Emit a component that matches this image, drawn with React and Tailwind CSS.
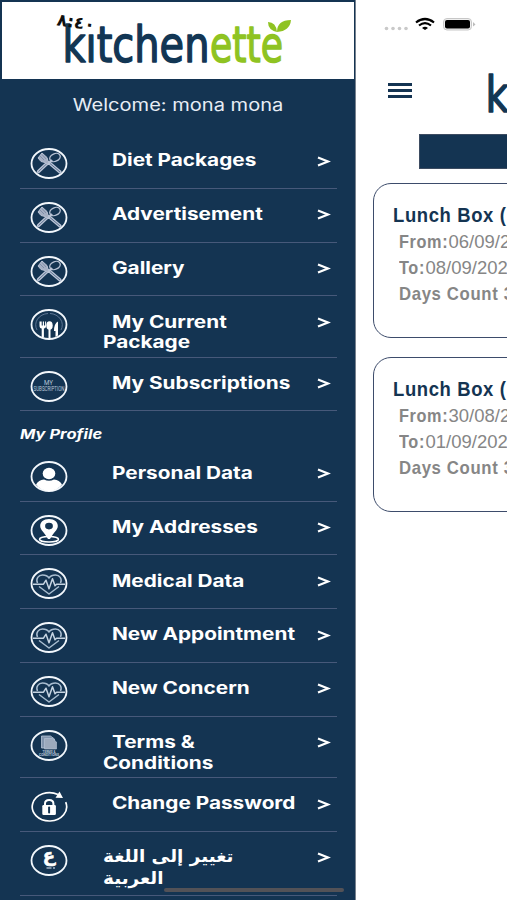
import React from 'react';

const LINE = 'font-["Inter",sans-serif] font-bold text-white text-[16.8px] leading-[20.5px] whitespace-pre';

function Utensils() {
  return (
    <g stroke="#b9c3d5" fill="none" strokeWidth="1">
      <path d="M20 15.500 L30 24" strokeWidth="3.4" strokeLinecap="round" />
      <path d="M20 15.500 L30 24" stroke="#5c7190" strokeWidth="1" />
      <path d="M17 15.500 L8.500 23.5" strokeWidth="3.4" strokeLinecap="round" />
      <path d="M17 15.500 L8.500 23.5" stroke="#5c7190" strokeWidth="1" />
      <path d="M8 10 L12 5 L17 9.5 L18 13 L20 15 L18 17 L15 14.5 L11 13.5 Z" fill="#a6b0c4" />
      <path d="M10 8 L14 12 M12 6.5 L16 11" stroke="#71819e" strokeWidth=".7" />
      <ellipse cx="25" cy="9.5" rx="5.500" ry="3.8" transform="rotate(-25 25 9.5)" strokeWidth="1.4" />
      <path d="M18 16 L22 12" strokeWidth="2.400" />
    </g>
  );
}

function Cutlery() {
  return (
    <g fill="#fff">
      <path d="M7 21 A13 11.5 0 0 1 18 4.5 M31 21 A13 11.5 0 0 0 20 4.5" fill="none" stroke="#7087a5" strokeWidth=".8" />
      <path d="M9.5 12.500v4q0 3 2.2 3v9h2.2v-9q2.2 0 2.2-3v-4h-1v4h-1.1v-4h-1.2v4h-1.1v-4z" />
      <ellipse cx="19.5" cy="16.500" rx="3.200" ry="4.300" />
      <path d="M18.500 18h2v11.500h-2zM28 12.500q-4 2-4 9.500h1.500v6l2.500-1.500z" />
    </g>
  );
}

function Subscription() {
  return (
    <g fill="#b9c6d8" fontFamily="Roboto, sans-serif" textAnchor="middle">
      <text x="18.5" y="13.5" fontSize="6.5" textLength="9" lengthAdjust="spacingAndGlyphs">MY</text>
      <text x="19" y="20" fontSize="6.5" textLength="31" lengthAdjust="spacingAndGlyphs">SUBSCRIPTION</text>
    </g>
  );
}

function Person() {
  return (
    <g fill="#fff">
      <ellipse cx="19" cy="12.5" rx="6.3" ry="5.8" />
      <path d="M6 23.5Q8.5 19 14 18.4q5 2.6 10 0Q29.500 19 32 23.500Q27 30 19 30T6 23.500z" />
    </g>
  );
}

function Pin() {
  return (
    <g>
      <ellipse cx="19" cy="24.200" rx="9.500" ry="2.800" fill="none" stroke="#fff" strokeWidth="1.500" />
      <path fill="#fff" fillRule="evenodd" d="M19 4C13.500 4 10.200 7.200 10.200 11C10.200 15 14.500 17.500 18 24h2C23.500 17.500 27.800 15 27.800 11C27.800 7.200 24.500 4 19 4zm0 3.800a3.900 3.300 0 1 1 0 6.600a3.900 3.300 0 1 1 0-6.600z" />
    </g>
  );
}

function Heart() {
  return (
    <g fill="none" stroke="#a9bdd0" strokeWidth="1.500" strokeLinejoin="round">
      <path d="M7.500 15C5.500 10.500 8.500 7 12.500 7Q17 7 19 10Q21 7 25.500 7C29.500 7 32.500 10.500 30.500 15" />
      <path d="M9 18.500L19 26L29 18.500" />
      <path d="M3 16.200h10.500l2.500-4l3 8.500l3.500-10l2.500 7l1.500-1.500h8.500" stroke="#c6d4e2" />
    </g>
  );
}

function Document() {
  return (
    <g>
      <path d="M11.500 6h9l4 3v9h-13z" fill="#8194ad" stroke="#b9c6d8" strokeWidth=".8" />
      <path d="M14.500 8.500h8l4 3.500v7h-12z" fill="#9daabd" stroke="#b9c6d8" strokeWidth=".6" />
      <g fill="#b9c6d8" fontFamily="Roboto, sans-serif" textAnchor="middle" fontWeight="700">
        <text x="19" y="22.500" fontSize="3.200" textLength="13" lengthAdjust="spacingAndGlyphs">TERMS &amp;</text>
        <text x="19" y="25.500" fontSize="3" textLength="20" lengthAdjust="spacingAndGlyphs">CONDITIONS</text>
      </g>
    </g>
  );
}

function Lock() {
  return (
    <g>
      <path d="M15 15v-2.500q0-3.500 4.200-3.500t4.200 3.500V15" fill="none" stroke="#fff" strokeWidth="2" />
      <rect x="12.300" y="14" width="13.600" height="10" rx="1.300" fill="#fff" />
      <path d="M19.100 16.500v5" stroke="#143452" strokeWidth="2" strokeLinecap="round" />
    </g>
  );
}

function Language() {
  return (
    <g>
      <text x="19" y="17" fill="#fff" stroke="#fff" strokeWidth=".6" textAnchor="middle" fontFamily="DejaVu Sans, sans-serif" fontWeight="700" fontSize="18">ع</text>
      <path d="M16.500 23h5M23 23h2" stroke="#9fb0c4" strokeWidth="1.600" />
    </g>
  );
}

function RoundIcon({ art: Art }) {
  return (
    <svg className="mt-[13px] block h-[31px] w-[38px] shrink-0" viewBox="0 0 38 31">
      {Art === Lock ? (
        <g>
          <path d="M28 3.500A17.200 14.200 0 1 0 35.700 11.200" fill="none" stroke="#fff" strokeWidth="1.700" />
          <path d="M25.500 6.800L29.500 .5L33 7z" fill="#fff" />
        </g>
      ) : (
        <ellipse cx="19" cy="15.500" rx="17.500" ry="14.500" fill="none" stroke="#f2f7fc" strokeWidth="1.800" />
      )}
      <Art />
    </svg>
  );
}

const packages = [
  { art: Utensils, text: 'Diet Packages' },
  { art: Utensils, text: 'Advertisement' },
  { art: Utensils, text: 'Gallery' },
  { art: Cutlery, text: 'My Current', more: 'Package' },
  { art: Subscription, text: 'My Subscriptions' },
];

const profile = [
  { art: Person, text: 'Personal Data' },
  { art: Pin, text: 'My Addresses' },
  { art: Heart, text: 'Medical Data' },
  { art: Heart, text: 'New Appointment' },
  { art: Heart, text: 'New Concern' },
  { art: Document, text: 'Terms &', more: 'Conditions' },
  { art: Lock, text: 'Change Password' },
];

function Row({ art, text, more, arabic }) {
  const height = arabic ? 'h-[64px]' : more ? 'h-[61.300px]' : 'h-[53.800px]';
  return (
    <div className={`flex shrink-0 items-start border-b border-[#47597a] pl-[10px] ${height}`}>
      <RoundIcon art={art} />
      {arabic ? (
        <div className='ml-[35px] mt-[13px] w-[131px] shrink-0 whitespace-nowrap font-["DejaVu_Sans",sans-serif] text-[17px] font-bold leading-[22px] text-white'>
          <div dir="rtl" className="w-max origin-left scale-x-[1.080]">{text}</div>
          <div dir="rtl" className="w-max origin-left scale-x-[1.080]">{more}</div>
        </div>
      ) : (
        <div className={`ml-[35px] mt-[15.300px] w-[205px] shrink-0 ${LINE}`}>
          <div className="ml-[9px] w-max origin-left scale-x-[1.238]">{text}</div>
          {more && <div className="w-max origin-left scale-x-[1.238]">{more}</div>}
        </div>
      )}
      <svg className={`mt-[20.500px] h-[11px] w-[14px] shrink-0 ${arabic ? 'ml-[83px]' : 'ml-[9px]'}`} viewBox="0 0 14 11">
        <path d="M1 1.500L11 5.500L1 9.500" fill="none" stroke="#fff" strokeWidth="2.200" />
      </svg>
    </div>
  );
}

function Logo({ className }) {
  return (
    <svg className={className} viewBox="0 0 230 52">
      <g fontFamily="DejaVu Sans Condensed, DejaVu Sans, sans-serif" fontSize="50.500" strokeWidth="1.400" strokeLinejoin="round">
        <text x="1.500" y="45.500" fill="#123654" stroke="#123654" textLength="147" lengthAdjust="spacingAndGlyphs">kıtchen</text>
        <text x="149" y="45.500" fill="#8fc322" stroke="#8fc322" textLength="73" lengthAdjust="spacingAndGlyphs">ette</text>
      </g>
      <path d="M207 6q8 0 9 10q-9-2-9-10zM230 4q-14 0-14 12q13-1 14-12z" fill="#8fc322" />
    </svg>
  );
}

function Card({ from, to }) {
  return (
    <div className='h-[154.500px] w-[320px] shrink-0 rounded-[18px] border border-[#3d4c6b] pl-[18.500px] pt-[17px] font-["Liberation_Sans",sans-serif] text-[#868686]'>
      <div className="w-max origin-left scale-x-[.900] whitespace-nowrap text-[20.500px] font-bold leading-[28px] tracking-[.700px] text-[#143452]">Lunch Box ( 30 days)</div>
      <div className="ml-[6px] text-[18.500px] leading-[26px]">
        <div className="flex whitespace-nowrap">
          <b className="w-[50px]"><span className="block w-max origin-left scale-x-[.880] tracking-[.700px]">From:</span></b>
          <span className="origin-left">{from}</span>
        </div>
        <div className="flex whitespace-nowrap">
          <b className="w-[27px]"><span className="block w-max origin-left scale-x-[.880] tracking-[.700px]">To:</span></b>
          <span className="origin-left">{to}</span>
        </div>
        <div className="w-max origin-left scale-x-[.905] whitespace-nowrap font-bold tracking-[.700px]">Days Count 3</div>
      </div>
    </div>
  );
}

export default function App() {
  return (
    <div className="flex h-[900px] w-[507px] overflow-hidden bg-white">
      <aside className="relative flex h-[900px] w-[356px] shrink-0 flex-col overflow-hidden border-r border-[#77818e] bg-[#143452]">
        <header className="relative ml-[2px] mt-[2px] h-[77px] w-[352px] shrink-0 bg-white">
          <Logo className="ml-[59px] mt-[14px] block h-[52px] w-[230px]" />
          <div className='absolute left-[55px] top-[10px] rotate-[8deg] font-["DejaVu_Sans",sans-serif] text-[17px] font-bold leading-[20px] text-[#101010]' dir="ltr">٨:٤٠</div>
        </header>
        <div className='flex h-[56px] shrink-0 items-start justify-center pl-[2px] pt-[14px] font-["Inter",sans-serif] text-[16.800px] leading-[24px] text-[#e7edf5]'>
          <span className="w-max scale-x-[1.195]">Welcome: mona mona</span>
        </div>
        <nav className="ml-5 flex w-[317px] flex-col">
          {packages.map((item) => <Row key={item.text} {...item} />)}
          <div className='h-[36.300px] shrink-0 pt-[12.500px] font-["Inter",sans-serif] text-[13px] font-bold italic leading-[20px] text-white'>
            <span className="block w-max origin-left scale-x-[1.270]">My Profile</span>
          </div>
          {profile.map((item) => <Row key={item.text} {...item} />)}
          <Row art={Language} text="تغيير إلى اللغة" more="العربية" arabic />
        </nav>
        <div className="absolute bottom-[8px] left-[164px] h-[4px] w-[180px] rounded-full bg-[#535257]" />
      </aside>
      <main className="flex w-[330px] shrink-0 flex-col">
        <div className="flex h-[48px] shrink-0 items-center pl-[28px]">
          <svg className="h-[16px] w-[94px]" viewBox="0 0 94 16">
            <g fill="#c9c9c9"><circle cx="2.500" cy="12.500" r="1.800" /><circle cx="9" cy="12.500" r="1.800" /><circle cx="15.500" cy="12.500" r="1.800" /><circle cx="22" cy="12.500" r="1.800" /></g>
            <g fill="none" stroke="#000" strokeWidth="2.200"><path d="M32 6.500Q41 -.5 50 6.500" /><path d="M35 9.500Q41 4.800 47 9.500" /></g>
            <path d="M38 12Q41 9.500 44 12L41 14z" />
            <rect x="59.500" y="2.500" width="28" height="11.500" rx="3.500" fill="#eee" stroke="#c7c7c7" />
            <rect x="61" y="4" width="25" height="8.500" rx="2" />
            <path d="M89 6l2.500 2.500l-2.500 2z" fill="#bbb" />
          </svg>
        </div>
        <div className="flex h-[86px] shrink-0 items-start pl-[32px]">
          <div className="mt-[35px] flex w-[24px] shrink-0 flex-col gap-[3px]">
            <i className="h-[3px] bg-[#143452]" /><i className="h-[3px] bg-[#143452]" /><i className="h-[3px] bg-[#143452]" />
          </div>
          <Logo className="ml-[71.500px] mt-[17.500px] h-[52px] w-[230px] shrink-0" />
        </div>
        <div className="ml-[62.500px] h-[35px] w-[240px] shrink-0 border border-[#3d4c61] bg-[#143452]" />
        <div className="ml-[17px] mt-[14px] flex flex-col gap-[19.500px]">
          <Card from="06/09/2020" to="08/09/2020" />
          <Card from="30/08/2020" to="01/09/2020" />
        </div>
      </main>
    </div>
  );
}
